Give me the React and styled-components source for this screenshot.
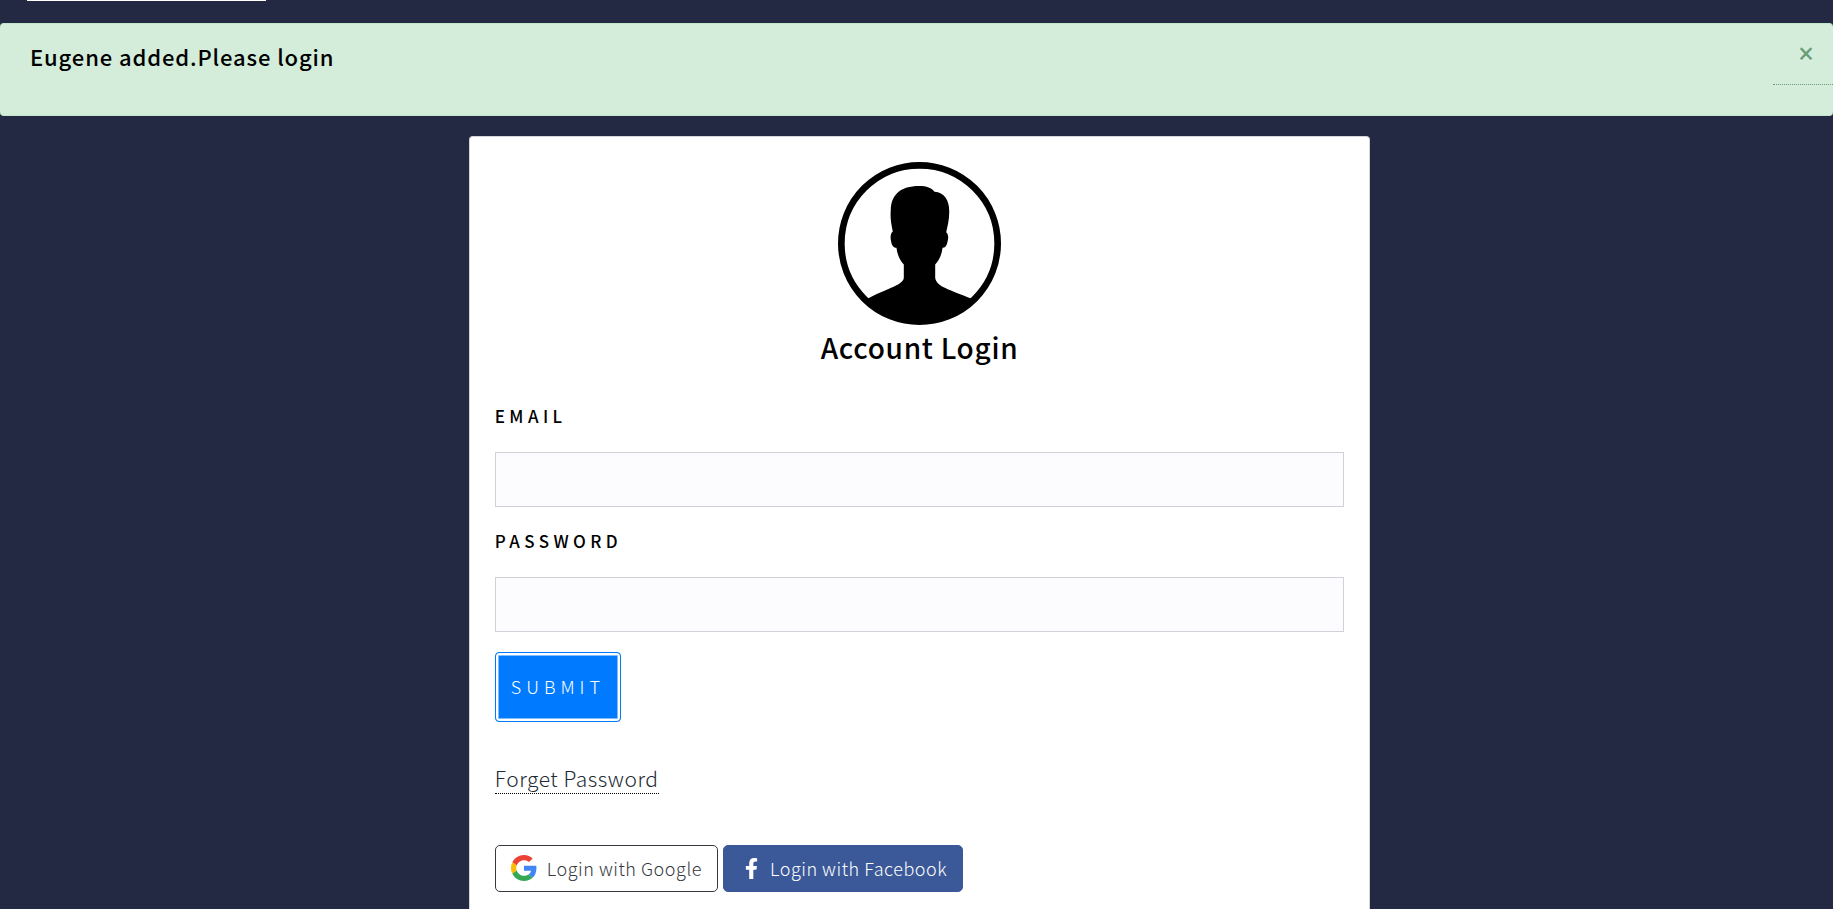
import React from "react";
import styled, { createGlobalStyle } from "styled-components";
import { FaFacebookF } from "react-icons/fa";

const GlobalStyle = createGlobalStyle`
  *, *::before, *::after { box-sizing: border-box; }
  body {
    margin: 0;
    background: #242943;
    color: #000;
    font-family: "Noto Sans CJK SC", "Noto Sans", sans-serif;
    font-weight: 300;
    font-size: 18px;
    line-height: 24px;
    letter-spacing: 0.03em;
  }
`;

const Page = styled.div`
  display: flex;
  flex-direction: column;
  min-height: 100vh;
`;

const HeaderRule = styled.div`
  width: 239px;
  height: 1px;
  margin: 0 0 22px 27px;
  background: #fff;
`;

const Alert = styled.div`
  display: flex;
  justify-content: space-between;
  align-items: flex-start;
  min-height: 93px;
  margin-bottom: 20px;
  padding-left: 30px;
  border: 1px solid #c3e6cb;
  border-width: 1px 0;
  border-radius: 4px;
  background: #d4edda;
`;

const AlertText = styled.h3`
  margin: 16px 0 0;
  font-size: 22px;
  line-height: 32px;
  font-weight: 500;
  letter-spacing: 0.04em;
`;

const CloseButton = styled.button`
  width: 60px;
  height: 61px;
  padding: 0 0 2px 6px;
  border: 0;
  border-bottom: 1px dotted #6a9f7a;
  background: transparent;
  color: #6a9f7a;
  font-family: "Open Sans", sans-serif;
  font-size: 28px;
  font-weight: 600;
  text-shadow: 0 1px 0 #e9f6ec;
  cursor: pointer;
`;

const Main = styled.main`
  flex: 1;
  display: flex;
  justify-content: center;
  padding-left: 6px;
`;

const Card = styled.section`
  width: calc(50% - 12px);
  padding: 25px 25px 18px;
  border: 1px solid #d3d4d9;
  border-bottom: 0;
  border-radius: 4px 4px 0 0;
  background: #fff;
`;

const CardHeader = styled.header`
  display: flex;
  flex-direction: column;
  align-items: center;
  margin-bottom: 32px;
`;

const Avatar = styled.svg`
  width: 163px;
  height: 163px;
`;

const Title = styled.h1`
  margin: 2px 0 0;
  font-size: 28px;
  line-height: 40px;
  font-weight: 500;
  letter-spacing: 0.025em;
`;

const Field = styled.div`
  display: flex;
  flex-direction: column;
  margin-bottom: 17px;
`;

const Label = styled.label`
  margin-bottom: 24px;
  padding-top: 4px;
  font-size: 17px;
  line-height: 25px;
  font-weight: 500;
  letter-spacing: 0.26em;
  text-transform: uppercase;
`;

const Input = styled.input`
  width: 100%;
  height: 55px;
  padding: 0 16px;
  border: 1px solid #d0d2da;
  border-radius: 0;
  background: #fcfcfe;
  font: inherit;
`;

const SubmitButton = styled.button`
  align-self: flex-start;
  height: 70px;
  margin-top: 3px;
  padding: 0 15px 2px;
  border: 1px solid #007bff;
  border-radius: 4px;
  background: #007bff;
  box-shadow: inset 0 0 0 2px #fff, inset 0 0 0 3px #80bdff;
  color: #fff;
  font: inherit;
  font-size: 18px;
  letter-spacing: 5px;
  text-transform: uppercase;
  cursor: pointer;
`;

const Form = styled.form`
  display: flex;
  flex-direction: column;
`;

const ForgetLink = styled.a`
  display: inline-block;
  margin: 42px 0 51px;
  border-bottom: 1px dotted #000;
  color: #212931;
  font-size: 21px;
  line-height: 29px;
  text-decoration: none;
`;

const SocialRow = styled.div`
  display: flex;
  flex-wrap: wrap;
  gap: 5px;
`;

const SocialButton = styled.button`
  display: flex;
  align-items: center;
  gap: ${(p) => (p.$brand ? "5px" : "10px")};
  height: 47px;
  padding: 0 15px 1px;
  border: 1px solid ${(p) => (p.$brand ? "#3b5998" : "#343a40")};
  border-radius: 5px;
  background: ${(p) => (p.$brand ? "#3b5998" : "#fff")};
  color: ${(p) => (p.$brand ? "#fff" : "#343a40")};
  font: inherit;
  font-size: 18px;
  letter-spacing: inherit;
  cursor: pointer;
`;

const LogoSlot = styled.span`
  display: flex;
  justify-content: center;
  width: 26px;
`;

function UserSilhouette() {
  return (
    <Avatar viewBox="115 96 488 488" role="img" aria-label="User">
      <defs>
        <clipPath id="disc">
          <circle cx="359" cy="340" r="240" />
        </clipPath>
      </defs>
      <circle cx="359" cy="340" r="234" fill="none" stroke="#000" strokeWidth="20" />
      <path
        clipPath="url(#disc)"
        d="M279 304C274 280 271 262 273 240C274 194 302 168 358 168C380 168 396 174 404 185C434 187 449 211 448 246C448 268 444 286 439 306C446 312 446 324 443 334C441 346 436 353 428 353C426 372 418 390 406 403L406 443C410 470 452 478 513 505L603 584L115 584L205 505C250 478 309 466 312 443L312 403C300 390 292 372 290 353C282 353 276 346 274 334C271 320 272 310 279 304Z"
      />
    </Avatar>
  );
}

function GoogleLogo() {
  return (
    <svg width="26" height="26" viewBox="0 0 48 48" aria-hidden="true">
      <path fill="#EA4335" d="M24 9.5c3.54 0 6.71 1.22 9.21 3.6l6.85-6.85C35.9 2.38 30.47 0 24 0 14.62 0 6.51 5.38 2.56 13.22l7.98 6.19C12.43 13.72 17.74 9.5 24 9.5z" />
      <path fill="#4285F4" d="M46.98 24.55c0-1.57-.15-3.09-.38-4.55H24v9.02h12.94c-.58 2.96-2.26 5.48-4.78 7.18l7.73 6c4.51-4.18 7.09-10.36 7.09-17.65z" />
      <path fill="#FBBC05" d="M10.53 28.59c-.48-1.45-.76-2.99-.76-4.59s.27-3.14.76-4.59l-7.98-6.19C.92 16.46 0 20.12 0 24c0 3.88.92 7.54 2.56 10.78l7.97-6.19z" />
      <path fill="#34A853" d="M24 48c6.48 0 11.93-2.13 15.89-5.81l-7.73-6c-2.15 1.45-4.92 2.3-8.16 2.3-6.26 0-11.57-4.22-13.47-9.91l-7.98 6.19C6.51 42.62 14.62 48 24 48z" />
    </svg>
  );
}

export default function App() {
  return (
    <>
      <GlobalStyle />
      <Page>
        <HeaderRule />
        <Alert role="alert">
          <AlertText>Eugene added.Please login</AlertText>
          <CloseButton type="button" aria-label="Close">×</CloseButton>
        </Alert>
        <Main>
          <Card>
            <CardHeader>
              <UserSilhouette />
              <Title>Account Login</Title>
            </CardHeader>
            <Form onSubmit={(e) => e.preventDefault()}>
              <Field>
                <Label htmlFor="email">Email</Label>
                <Input id="email" type="email" name="email" />
              </Field>
              <Field>
                <Label htmlFor="password">Password</Label>
                <Input id="password" type="password" name="password" />
              </Field>
              <SubmitButton type="submit">Submit</SubmitButton>
            </Form>
            <ForgetLink href="#forget">Forget Password</ForgetLink>
            <SocialRow>
              <SocialButton type="button">
                <LogoSlot><GoogleLogo /></LogoSlot>
                Login with Google
              </SocialButton>
              <SocialButton type="button" $brand>
                <LogoSlot><FaFacebookF size={21} aria-hidden="true" /></LogoSlot>
                Login with Facebook
              </SocialButton>
            </SocialRow>
          </Card>
        </Main>
      </Page>
    </>
  );
}
